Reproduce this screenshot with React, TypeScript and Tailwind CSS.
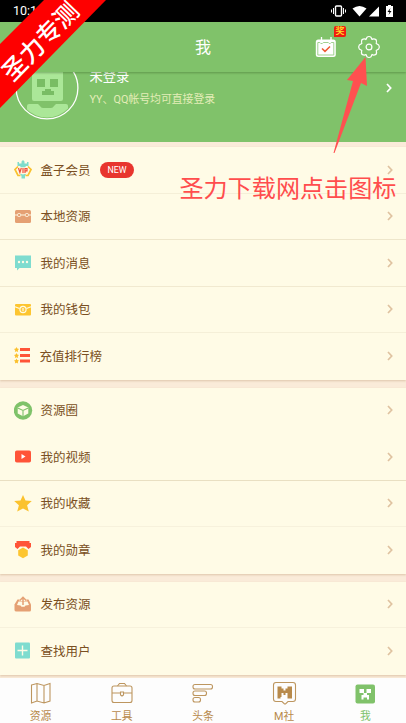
import type { ReactNode } from 'react';

type Item = { label: string; icon: ReactNode; badge?: string; line?: string };

const VipIcon = () => (
  <svg width="18" height="19" viewBox="0 0 18 19">
    <path d="M7.500 1.500L9 0l1.500 1.500v2H13V2h1.500v4H12l-1 1.500H7L6 6H3.500V2H5v1.500h2.500z" fill="#7fdccb" />
    <path d="M6 14h6l-1 2v2.500H7.500V16z" fill="#7fdccb" />
    <path d="M4 6.500L1 9.500l3 6h2.500M14 6.500l3 3-3 6h-2.500" fill="none" stroke="#f9c12e" strokeWidth="1.700" />
    <path d="M4 7.500h10v5.500L9 14.500 4 13z" fill="#fff6dd" />
    <path d="M4.500 8l1.400 4.500L7.300 8M9 8v5M11 13V8.500h2v2.300h-2" fill="none" stroke="#f0503c" strokeWidth="1.200" />
  </svg>
);

const ChestIcon = () => (
  <svg width="18" height="19" viewBox="0 0 18 19">
    <rect x="1" y="3" width="16" height="13" rx="1.500" fill="#e5a073" />
    <path d="M1 8h2.500M7 8h4M14.500 8H17" stroke="#fff8e4" strokeWidth="1.100" />
    <rect x="3.600" y="6.500" width="3" height="3" rx="1" fill="none" stroke="#fff8e4" />
    <rect x="11.400" y="6.500" width="3" height="3" rx="1" fill="none" stroke="#fff8e4" />
  </svg>
);

const MessageIcon = () => (
  <svg width="18" height="19" viewBox="0 0 18 19">
    <path d="M1 2.500h16v12.500H5.500L3 17.500V15H1z" fill="#7fdccf" />
    <circle cx="5" cy="9" r="1.200" fill="#fffbe6" />
    <circle cx="9" cy="9" r="1.200" fill="#fffbe6" />
    <circle cx="13" cy="9" r="1.200" fill="#fffbe6" />
  </svg>
);

const WalletIcon = () => (
  <svg width="18" height="19" viewBox="0 0 18 19">
    <rect x="1" y="4" width="16" height="11.500" rx="1" fill="#fdc530" />
    <path d="M1 6.800l4.500 1.700M17 6.800l-4.500 1.700" stroke="#fffbe6" strokeWidth="1.200" />
    <circle cx="9" cy="9.500" r="3.100" fill="#fdc530" stroke="#fffbe6" strokeWidth="1.200" />
    <path d="M7.800 7.800L9 9.200l1.200-1.400M9 9v2.500M7.800 10h2.400" fill="none" stroke="#fffbe6" strokeWidth=".7" />
  </svg>
);

const star = 'M2.500 0l.8 1.600 1.700.3-1.200 1.300.3 1.800-1.600-.8L.9 5l.3-1.800L0 1.900l1.700-.3z';

const RankIcon = () => (
  <svg width="18" height="19" viewBox="0 0 18 19">
    {[2, 8, 13.5].map(y => (
      <g key={y}>
        <path transform={`translate(0 ${y - 1})`} d={star} fill="#fbc02d" />
        <rect x="6" y={y} width="10" height="3" fill="#ff5438" />
      </g>
    ))}
  </svg>
);

const CircleIcon = () => (
  <svg width="19" height="19" viewBox="0 0 19 19">
    <circle cx="9" cy="9.500" r="9.200" fill="#7fc26a" />
    <path d="M9 4l5.300 2.600v5.800L9 15.200l-5.300-2.800V6.600z" fill="#fffbe6" />
    <path d="M3.700 6.900L9 9.500l5.300-2.600M9 9.500v5.700" fill="none" stroke="#7fc26a" strokeWidth="1.100" />
  </svg>
);

const VideoIcon = () => (
  <svg width="18" height="19" viewBox="0 0 18 19">
    <rect x="1" y="3.500" width="16" height="12" rx="1.800" fill="#ff5438" />
    <path d="M7.500 7l4 2.600-4 2.500z" fill="#fff" />
  </svg>
);

const StarIcon = () => (
  <svg width="18" height="19" viewBox="0 0 18 19">
    <path d="M9 1l2.500 5.500 6.300.5-4.700 4.300 1.700 6.200L9 14.500l-5.800 3 1.700-6.200L.2 7l6.300-.5z" fill="#fbc22e" />
  </svg>
);

const MedalIcon = () => (
  <svg width="18" height="19" viewBox="0 0 18 19">
    <path d="M2.500 1h13v2H17v4l-2.500 2-2.500-2.500H6L3.500 9 1 7V3h1.500z" fill="#ff5438" />
    <path d="M9 7.500l4.800 2.700v5.300L9 18.200l-4.800-2.700v-5.300z" fill="#fdc530" />
  </svg>
);

const PublishIcon = () => (
  <svg width="18" height="19" viewBox="0 0 18 19">
    <path d="M3.500 4.500h11L17 9.500v5.500q0 1.500-1.500 1.500h-13Q.5 16.500.5 15V9.500z" fill="#e5a073" />
    <path d="M3 10l1.500-3.500h9L15 10l-3.500.500-1 1.200h-3l-1-1.200z" fill="#fffbe6" />
    <path d="M9 2v4" stroke="#fffbe6" strokeWidth="7" />
    <path d="M9 10V2.500M5.800 5.500L9 2.300l3.200 3.200" fill="none" stroke="#e5a073" strokeWidth="1.500" />
  </svg>
);

const FindIcon = () => (
  <svg width="18" height="19" viewBox="0 0 18 19">
    <rect x="1" y="1.500" width="15" height="16" rx="1" fill="#7fdccf" />
    <path d="M8.500 4.500v10M3.500 9.500h10" stroke="#fffbe6" strokeWidth="1.400" />
  </svg>
);

const groups: Item[][] = [
  [
    { label: '盒子会员', icon: <VipIcon />, badge: 'NEW', line: 'border-[#f5efd8]' },
    { label: '本地资源', icon: <ChestIcon />, line: 'border-[#eee6cb]' },
    { label: '我的消息', icon: <MessageIcon />, line: 'border-[#f1e9d0]' },
    { label: '我的钱包', icon: <WalletIcon />, line: 'border-[#f5efd8]' },
    { label: '充值排行榜', icon: <RankIcon /> },
  ],
  [
    { label: '资源圈', icon: <CircleIcon /> },
    { label: '我的视频', icon: <VideoIcon />, line: 'border-[#e9dfc2]' },
    { label: '我的收藏', icon: <StarIcon />, line: 'border-[#f7f1dc]' },
    { label: '我的勋章', icon: <MedalIcon /> },
  ],
  [
    { label: '发布资源', icon: <PublishIcon />, line: 'border-[#f7f1dc]' },
    { label: '查找用户', icon: <FindIcon /> },
  ],
];

function Chevron({ className }: { className: string }) {
  return (
    <svg width="6" height="10" viewBox="0 0 6 10" className={className}>
      <path d="M1 1l3.700 4L1 9" fill="none" stroke="currentColor" strokeWidth="1.700" />
    </svg>
  );
}

function Row({ item }: { item: Item }) {
  return (
    <div className={`flex h-[46.500px] items-center border-b pl-3.5 pr-[13px] ${item.line ?? 'border-transparent'}`}>
      <span className="flex w-[19px] shrink-0">{item.icon}</span>
      <span className={`pt-[3px] text-[12.500px] text-[#7a4f22] ${item.label.length === 5 ? 'ml-[6.500px]' : 'ml-[7.500px]'}`}>{item.label}</span>
      {item.badge && (
        <span className="ml-[9.500px] flex h-4 w-[34px] items-center justify-center rounded-full bg-[#e8352e] pt-px font-[Roboto] text-[8.800px] text-white">
          {item.badge}
        </span>
      )}
      <Chevron className="ml-auto text-[#dfc2a0]" />
    </div>
  );
}

function StatusBar() {
  return (
    <div className="flex h-[22px] items-center justify-between bg-black pl-[13px] pr-3 text-white">
      <span className="pt-px font-[Roboto] text-[12.500px]">10:10</span>
      <svg width="64" height="14" viewBox="0 0 64 14" fill="currentColor">
        <rect x="5.500" y="2" width="6" height="10" rx="1" fill="none" stroke="currentColor" strokeWidth="1.400" />
        <path d="M3.500 4v6M13.500 4v6M1.500 5.500v3M15.500 5.500v3" stroke="currentColor" />
        <path d="M22.500 4.500q7-5 14 0L29.500 12.500z" />
        <path d="M49 2.500v10H39z" />
        <path d="M56 2h2V1h3v1h2v11h-7z" />
        <path d="M60.500 4l-3 4h2l-1 3 3-4h-2z" fill="#000" />
      </svg>
    </div>
  );
}

function Header() {
  return (
    <header className="relative z-10 flex h-[50px] items-center justify-end bg-[#80c26a] pr-[26px] shadow-[0_1px_2px_rgba(50,90,30,0.4)]">
      <h1 className="absolute inset-x-0 pt-[2px] text-center text-[16px] text-white">我</h1>
      <div className="relative mr-[21px] -mt-px flex">
        <svg width="22" height="22" viewBox="0 0 22 22">
          <path d="M6.500 1v5M16 1v5" stroke="#fff" strokeWidth="1.300" />
          <rect x=".8" y="3.500" width="20" height="17.500" rx="2.500" fill="#fff" />
          <path d="M2.800 6.500h2l1 1h1.500l1-1h5l1 1h1l1-1h2.500V19h-16z" fill="none" stroke="#96cc83" strokeWidth=".9" />
          <path d="M7 12.500l3 2.900 5-4.900" fill="none" stroke="#ef5a34" strokeWidth="1.500" />
        </svg>
        <span className="absolute left-[19px] top-[-10px] flex h-[11px] w-3 items-center justify-center rounded-[2px] rounded-bl-none bg-[#f01c10] pt-px text-[9px] font-medium leading-none text-[#ffe528]">奖</span>
      </div>
      <svg width="22" height="22" viewBox="0 0 22 22" fill="none" stroke="#fff" strokeWidth="1.200" strokeLinejoin="round" className="overflow-visible">
        <path d="M9 1.200Q11 -.2 13 1.200L14 3.500Q15.500 2.300 18 3.600Q19 5.500 18.200 7.600L20.700 9Q22 11 20.700 13L18.200 14.400Q19 16.500 18 18.400Q15.500 19.700 14 18.500L13 20.800Q11 22.200 9 20.800L8 18.500Q6.500 19.700 4 18.400Q3 16.500 3.800 14.400L1.300 13Q0 11 1.300 9L3.800 7.600Q3 5.500 4 3.600Q6.500 2.300 8 3.500Z" />
        <circle cx="11" cy="11" r="2.900" />
      </svg>
    </header>
  );
}

function Profile() {
  return (
    <section className="flex h-[70px] overflow-hidden bg-[#80c26a] pl-[15px] pr-3.5">
      <svg width="64" height="64" viewBox="0 0 64 64" className="-mt-4 shrink-0">
        <defs>
          <clipPath id="face"><circle cx="32" cy="32" r="29.500" /></clipPath>
        </defs>
        <g clipPath="url(#face)">
          <rect x="17" y="8" width="31" height="37" rx="2" fill="#abe798" />
          <path d="M22 23h8v8h-8zM35 23h8v8h-8zM30 33h6v2h3v4H27v-4h3z" fill="#79bd64" />
          <path d="M12 50q0-2 2-2h9l2 2q1 2 3 2h8q2 0 3-2l2-2h10q2 0 2 2v14H12z" fill="#abe798" />
        </g>
        <circle cx="32" cy="32" r="30.900" fill="none" stroke="#fff" strokeWidth="1.300" />
      </svg>
      <div className="-mt-[5px] ml-[10.500px]">
        <p className="text-[13.300px] leading-5 text-white">未登录</p>
        <p className="mt-[5px] text-[10.850px] leading-4 text-[#e4edb8]">YY、QQ帐号均可直接登录</p>
      </div>
      <Chevron className="ml-auto mt-[11px] text-white" />
    </section>
  );
}

const tabs = [
  {
    label: '资源',
    icon: <path d="M1.500 3L7 1.500l7 2 6-2V19l-6 2-7-2-5.500 2zM7 1.500V19M14 3.500V21" />,
  },
  {
    label: '工具',
    icon: (
      <>
        <rect x="1" y="4" width="20" height="16.500" rx="2" />
        <path d="M6.500 4l2-2.500h5l2 2.500M1 11h8.500M12.500 11H21M9.500 10h3v3l-1.500 1-1.500-1z" />
      </>
    ),
  },
  {
    label: '头条',
    icon: (
      <>
        <rect x="1" y="2.500" width="19.500" height="4.500" rx="2" />
        <rect x="1" y="9" width="13.500" height="4.500" rx="2" />
        <rect x="1" y="15.500" width="7.500" height="4.500" rx="2" />
      </>
    ),
  },
  {
    label: 'M社',
    icon: (
      <>
        <path d="M3 .5h17q2.500 0 2.500 2.500v14q0 2.500-2.500 2.500h-5l-2.500 2.500h-1L9 19.500H3Q.5 19.500.5 17V3Q.5.5 3 .5z" />
        <path d="M4.500 4.500h4v2h2v2h2v-2h2v-2H19v12h-4.500v-5.500h-2v2h-2v-2h-2v4h-1v1.500h-3z" fill="#b88a4b" stroke="none" />
      </>
    ),
  },
  {
    label: '我',
    icon: (
      <g stroke="none">
        <rect x="1.500" y="2.500" width="19.500" height="19" rx="2" fill="#80c26a" />
        <path d="M5.500 7H10v4H5.500zM12.500 7H17v4h-4.500zM9.500 11h3.500v2h2v4.500h-2v-2H9.500v2h-2v-4.500h2z" fill="#fff" />
      </g>
    ),
  },
];

function TabBar() {
  return (
    <nav className="grid h-[45px] grid-cols-5 bg-[#fdfdfd]">
      {tabs.map(t => (
        <div key={t.label} className={`flex flex-col items-center pt-1 ${t.label === '我' ? 'text-[#80c26a]' : 'text-[#b88a4b]'}`}>
          <svg width="22" height="23" viewBox="0 0 22 23" fill="none" stroke="#bd965f" strokeWidth="1.100" className="overflow-visible">
            {t.icon}
          </svg>
          <span className="mt-[5px] text-[10.800px] leading-[14px]">{t.label}</span>
        </div>
      ))}
    </nav>
  );
}

export default function App() {
  return (
    <div className="relative flex h-[723px] w-[406px] flex-col overflow-hidden bg-[#faebd9] font-['Roboto','Noto_Sans_CJK_SC',sans-serif]">
      <StatusBar />
      <Header />
      <Profile />
      <main className="flex h-[536px] flex-col gap-[8px] overflow-hidden pt-[5px]">
        {groups.map((items, i) => (
          <div key={i} className="shrink-0 bg-[#fffbe6] shadow-[0_1px_2px_rgba(170,130,80,0.35)]">
            {items.map(item => <Row key={item.label} item={item} />)}
          </div>
        ))}
      </main>
      <TabBar />

      {/* watermark ribbon, arrow and caption sit over the page */}
      <svg width="120" height="120" className="absolute left-0 top-0 z-20">
        <path d="M44 0h62L0 108V44z" fill="#fe0000" />
      </svg>
      <span className="absolute left-[-10px] top-[24px] z-20 w-[102px] -rotate-[46deg] whitespace-nowrap text-center text-[24.500px] font-medium leading-9 text-white">圣力专测</span>
      <svg width="30" height="100" viewBox="0 0 30 100" className="absolute left-[340px] top-[57px] z-20 overflow-visible">
        <path d="M25.500 0L27 29l-6-3L-5.500 96h-1L13 24l-6-1z" fill="#ff5050" />
      </svg>
      <p className="absolute left-[179.500px] top-[171px] z-20 whitespace-nowrap text-[24.100px] leading-9 text-[#ff4d4d]">圣力下载网点击图标</p>
    </div>
  );
}
